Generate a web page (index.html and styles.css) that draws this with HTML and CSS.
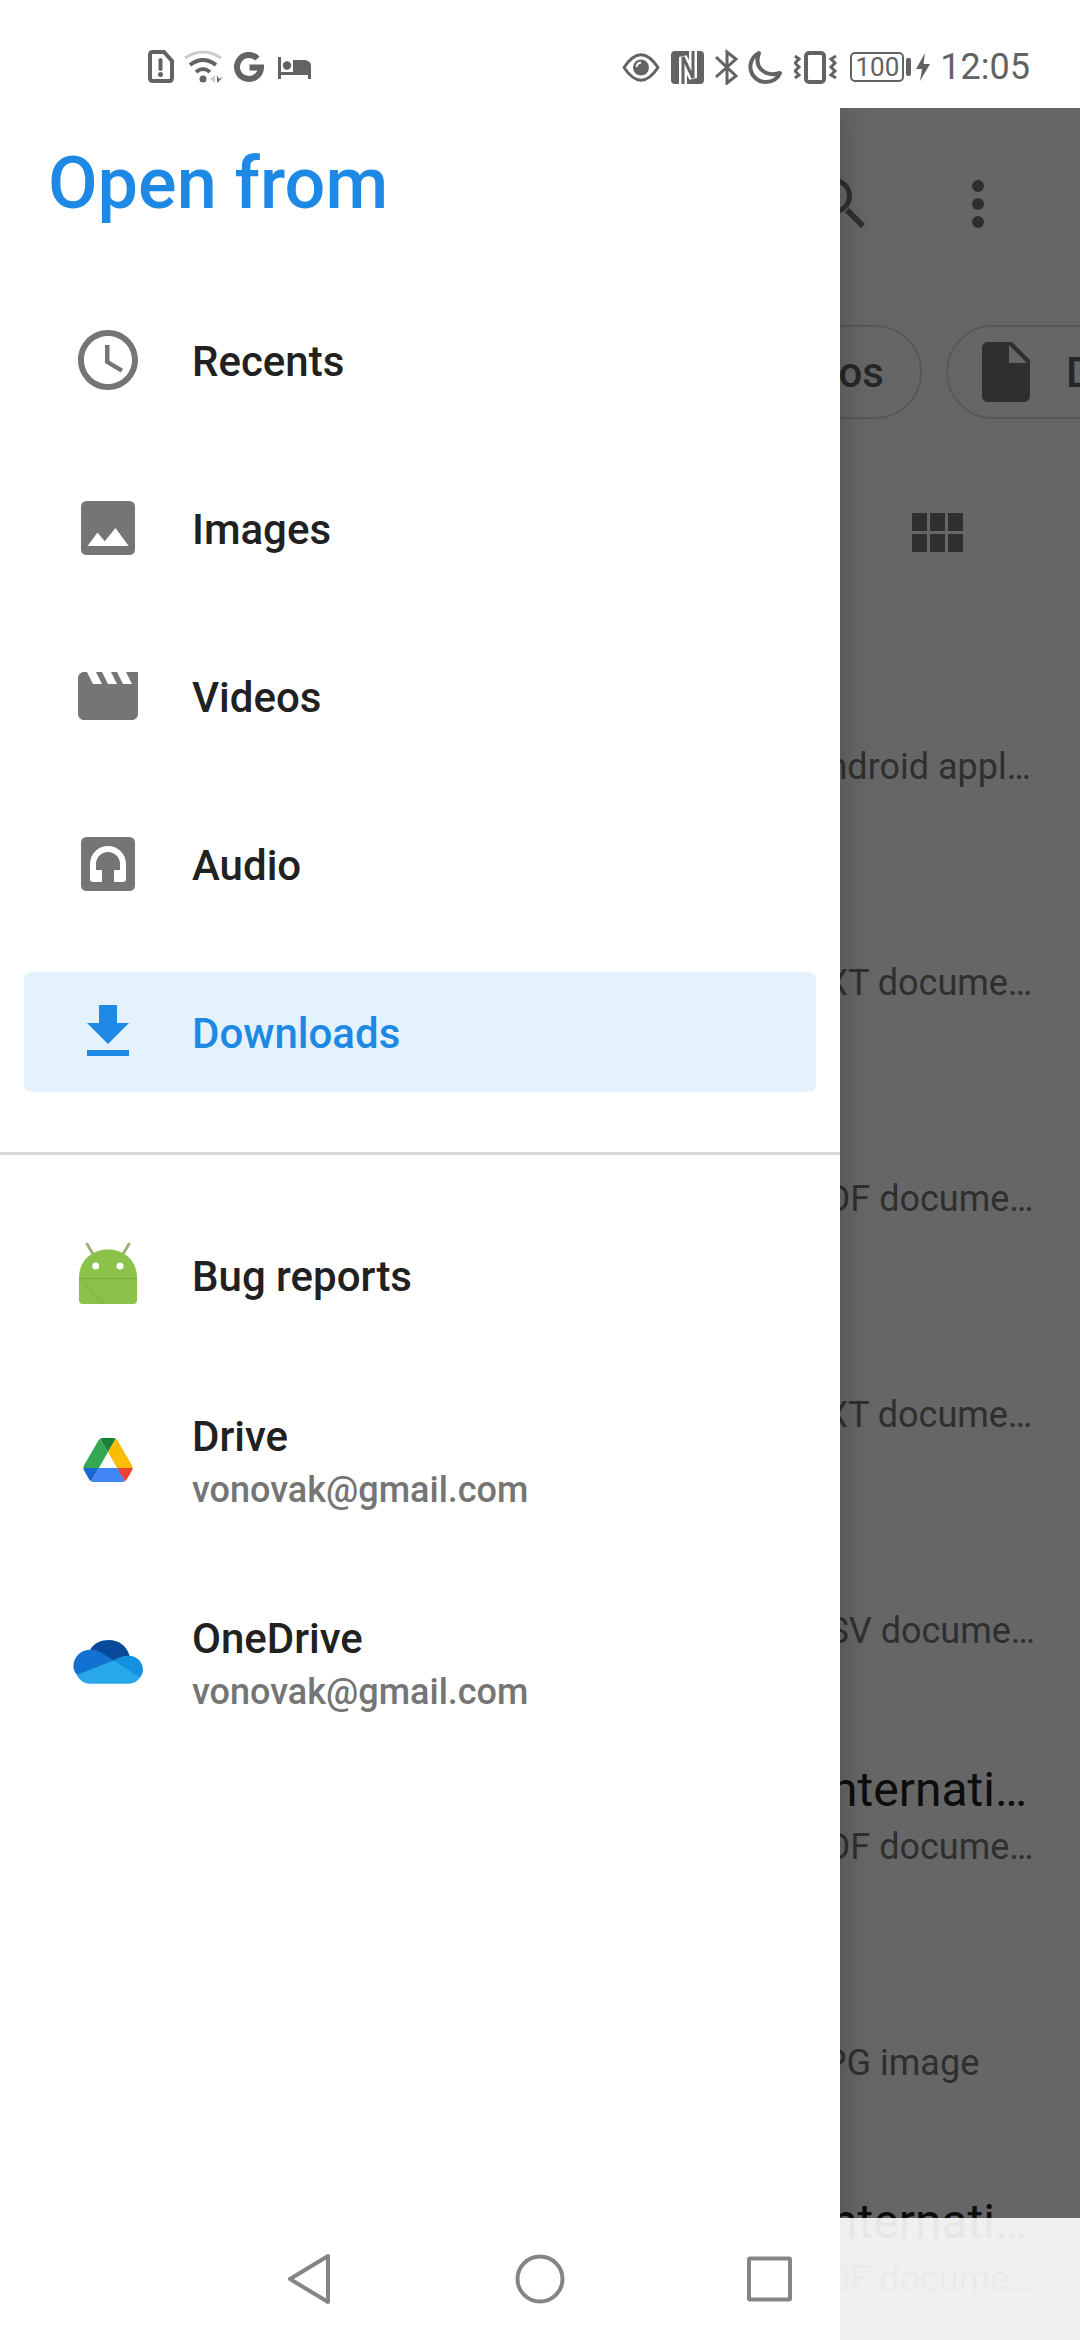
FILE: index.html
```html
<!DOCTYPE html>
<html lang="en">
<head>
<meta charset="utf-8">
<meta name="viewport" content="width=device-width, initial-scale=1">
<title>Open from</title>
<link rel="stylesheet" href="styles.css">
</head>
<body>
<header class="status">
  <div class="status-group">
    <svg width="26" height="36" viewBox="148 48 26 36" fill="none" stroke="currentColor" stroke-width="4"><path d="M153 51H164L172 60V77Q172 80 169 80H153Q150 80 150 77V54Q150 51 153 51Z"/><path d="M160.500 59V68" stroke-linecap="round"/><circle cx="160.500" cy="73.500" r="2.500" fill="currentColor" stroke="none"/></svg>
    <svg width="40" height="36" viewBox="184 48 40 36" fill="none" stroke="currentColor" stroke-width="4"><path d="M185 57Q203 45 221 57" stroke="#ccc" stroke-width="3"/><path d="M190 64Q203 54 216 64M196 71Q203 65 210 71"/><circle cx="203" cy="78" r="3.500" fill="currentColor" stroke="none"/><path d="M215 74V82L210 78Z" fill="#ccc" stroke="none"/><path d="M217 74V82L223 76L219 78Z" fill="currentColor" stroke="none"/></svg>
    <svg width="34" height="36" viewBox="234 48 34 36" fill="none" stroke="currentColor" stroke-width="6"><path d="M257.500 57.500A12 12 0 1 0 261 66.500H249.500"/></svg>
    <svg width="34" height="36" viewBox="278 48 34 36" fill="currentColor"><path d="M278 56h3v15h12V59h12q6 1 6 6v13h-3v-4h-27v4h-3z"/><circle cx="287" cy="64.500" r="4.200"/></svg>
  </div>
  <div class="status-group">
    <svg width="38" height="36" viewBox="620 48 38 36" fill="none" stroke="currentColor" stroke-width="3"><path d="M622 66.500Q639 41 656 66.500Q639 92 622 66.500Z" stroke-linejoin="round"/><circle cx="639" cy="66.500" r="8" fill="currentColor" stroke="none"/><path d="M634.500 66Q635 62 639 61.500" stroke="#fff" stroke-width="2"/></svg>
    <svg width="34" height="36" viewBox="668 48 34 36" fill="none"><rect x="669" y="50" width="33" height="33" rx="4" fill="currentColor"/><path d="M681 83V56L691 77V50" stroke="#fff" stroke-width="8"/><path d="M681 83V56L691 77V50" stroke="currentColor" stroke-width="3"/></svg>
    <svg width="24" height="36" viewBox="712 48 24 36" fill="none" stroke="currentColor" stroke-width="3"><path d="M714 56L734 75L725 82V51L734 58L714 76"/></svg>
    <svg width="36" height="36" viewBox="746 48 36 36" fill="none" stroke="currentColor" stroke-width="4" stroke-linejoin="round"><path d="M757 52C742 60 748 81 764 81C771 81 776 77 778 72C765 76 751 68 757 52Z"/></svg>
    <svg width="46" height="36" viewBox="792 48 46 36" fill="none" stroke="currentColor" stroke-width="4"><rect x="804" y="52" width="18" height="29" rx="3"/><path d="M793 55L797 58L793 62L797 66L793 70L797 74L793 77M834 55L829 58L833 62L829 66L833 70L829 74L834 77" stroke-width="3"/></svg>
    <div class="battery"><span class="battery-level">100</span><span class="battery-tip"></span>
      <svg width="14" height="28" viewBox="0 0 14 28" fill="currentColor"><path d="M9 0L0 16H6L4 28L14 11H7.500Z"/></svg>
    </div>
    <time class="clock">12:05</time>
  </div>
</header>

<div class="stage">
  <main class="browser">
    <div class="toolbar">
      <button class="icon-button" aria-label="Search"><svg width="72" height="72" viewBox="0 0 72 72" fill="none" stroke="currentColor"><circle cx="30" cy="28" r="15.500" stroke-width="5"/><path d="M43 42L59 58" stroke-width="6"/></svg></button>
      <button class="icon-button" aria-label="More options"><svg width="72" height="72" viewBox="0 0 24 24" fill="currentColor"><circle cx="12" cy="6" r="2"/><circle cx="12" cy="12" r="2"/><circle cx="12" cy="18" r="2"/></svg></button>
    </div>
    <div class="chips">
      <button class="chip"><svg width="72" height="72" viewBox="0 0 24 24" fill="currentColor"><path d="M18 4l2 4h-3l-2-4h-2l2 4h-3l-2-4H8l2 4H7L5 4H4c-1.100 0-2 .9-2 2v12c0 1.100.9 2 2 2h16c1.100 0 2-.9 2-2V4h-4z"/></svg>Videos</button>
      <button class="chip"><svg width="72" height="72" viewBox="0 0 24 24" fill="currentColor"><path fill-rule="evenodd" d="M6 2C4.900 2 4 2.900 4 4V20C4 21.100 4.900 22 6 22H18C19.100 22 20 21.100 20 20V8L14 2H6ZM13 3V9H19Z"/></svg>Documents</button>
    </div>
    <div class="viewbar">
      <button class="icon-button" aria-label="Grid view"><svg width="72" height="72" viewBox="0 0 24 24" fill="currentColor"><path d="M4 11h5V5H4v6zm0 7h5v-6H4v6zm6 0h5v-6h-5v6zm6 0h5v-6h-5v6zm-6-7h5V5h-5v6zm6-6v6h5V5h-5z"/></svg></button>
    </div>
    <ul class="files">
      <li class="file"><span class="file-name"></span><span class="file-type">Android appl…</span></li>
      <li class="file"><span class="file-name"></span><span class="file-type">TXT docume…</span></li>
      <li class="file"><span class="file-name"></span><span class="file-type">PDF docume…</span></li>
      <li class="file"><span class="file-name"></span><span class="file-type">TXT docume…</span></li>
      <li class="file"><span class="file-name"></span><span class="file-type">CSV docume…</span></li>
      <li class="file"><span class="file-name">Internati…</span><span class="file-type">PDF docume…</span></li>
      <li class="file"><span class="file-name"></span><span class="file-type">JPG image</span></li>
      <li class="file"><span class="file-name">Internati…</span><span class="file-type">PDF docume…</span></li>
    </ul>
  </main>
  <div class="scrim"></div>

  <nav class="drawer" aria-label="Open from">
    <h1 class="drawer-title">Open from</h1>
    <div class="roots">
      <button class="root"><svg width="72" height="72" viewBox="0 0 24 24" fill="currentColor"><path d="M11.990 2C6.470 2 2 6.480 2 12s4.470 10 9.990 10C17.520 22 22 17.520 22 12S17.520 2 11.990 2zM12 20c-4.420 0-8-3.580-8-8s3.580-8 8-8 8 3.580 8 8-3.580 8-8 8z"/><path d="M12.500 7H11v6l5.250 3.150.75-1.230-4.500-2.670z"/></svg>Recents</button>
      <button class="root"><svg width="72" height="72" viewBox="0 0 24 24" fill="currentColor"><path fill-rule="evenodd" d="M5 3H19Q21 3 21 5V19Q21 21 19 21H5Q3 21 3 19V5Q3 3 5 3ZM5.200 18H18.900L14.500 12L10.900 16.400L8.500 13.500Z"/></svg>Images</button>
      <button class="root"><svg width="72" height="72" viewBox="0 0 24 24" fill="currentColor"><path d="M18 4l2 4h-3l-2-4h-2l2 4h-3l-2-4H8l2 4H7L5 4H4c-1.100 0-2 .9-2 2v12c0 1.100.9 2 2 2h16c1.100 0 2-.9 2-2V4h-4z"/></svg>Videos</button>
      <button class="root"><svg width="72" height="72" viewBox="0 0 24 24" fill="currentColor"><path fill-rule="evenodd" d="M5 3H19Q21 3 21 5V19Q21 21 19 21H5Q3 21 3 19V5Q3 3 5 3ZM6 12V17Q6 18 7 18H10V14H8V12A4 4 0 0 1 16 12V14H14V18H17Q18 18 18 17V12A6 6 0 0 0 6 12Z"/></svg>Audio</button>
      <button class="root root-active" aria-current="true"><svg width="72" height="72" viewBox="0 0 24 24" fill="currentColor"><path d="M19 9h-4V3H9v6H5l7 7 7-7zM5 18v2h14v-2H5z"/></svg>Downloads</button>
    </div>
    <hr class="divider">
    <div class="roots">
      <button class="root"><svg width="72" height="72" viewBox="0 0 72 72"><path d="M15 5L21 15M57 5L51 15" stroke="#9cb67a" stroke-width="3" stroke-linecap="round"/><path d="M7 39C7 1 65 1 65 39V61Q65 65 61 65H11Q7 65 7 61Z" fill="#8bc34a"/><path d="M7 40H11L36 65H27Z" fill="#7fb344" opacity=".5"/><path d="M7 39.500H65" stroke="#78a840" stroke-width="1"/><circle cx="23.700" cy="27" r="3.500" fill="#fff"/><circle cx="48" cy="27" r="3.500" fill="#fff"/></svg>Bug reports</button>
      <button class="root root-account"><svg width="72" height="44" viewBox="-20 0 127.300 78"><path fill="#1967d2" d="m6.600 66.850 3.850 6.650c.8 1.400 1.950 2.500 3.300 3.300l13.750-23.800h-27.500c0 1.550.4 3.100 1.200 4.500z"/><path fill="#34a853" d="m43.650 25-13.750-23.800c-1.350.8-2.500 1.900-3.300 3.300l-25.400 44a9.060 9.060 0 0 0 -1.200 4.500h27.500z"/><path fill="#ea4335" d="m73.550 76.800c1.350-.8 2.500-1.900 3.300-3.300l1.600-2.750 7.650-13.250c.8-1.400 1.200-2.950 1.200-4.500h-27.502l5.852 11.500z"/><path fill="#188038" d="m43.650 25 13.750-23.800c-1.350-.8-2.900-1.200-4.500-1.200h-18.500c-1.600 0-3.150.45-4.500 1.200z"/><path fill="#4285f4" d="m59.800 53h-32.300l-13.750 23.800c1.350.8 2.900 1.200 4.500 1.200h50.800c1.600 0 3.150-.45 4.500-1.200z"/><path fill="#fbbc04" d="m73.400 26.500-12.700-22c-.8-1.400-1.950-2.500-3.300-3.300l-13.750 23.800 16.150 28h27.450c0-1.550-.4-3.100-1.200-4.500z"/></svg><span class="account"><span>Drive</span><span class="account-mail">vonovak@gmail.com</span></span></button>
      <button class="root root-account"><svg width="72" height="44" viewBox="-4 0 214 131"><path fill="#094a9a" d="M50 29C62 8 83 0 105 0C137 0 160 20 167 47L118 75L50 45Z"/><path fill="#1272d2" d="M50 29C66 28 78 34 88 41L122 61L14 106C4 98 0 88 0 79C0 51 22 29 50 29Z"/><path fill="#1490df" d="M118 62C132 53 146 47 165 47C188 47 207 66 207 88C207 98 204 106 196 114Z"/><path fill="#28a8ea" d="M10 104L119 61L198 111C190 125 178 130 165 130H50C33 130 19 120 10 104Z"/></svg><span class="account"><span>OneDrive</span><span class="account-mail">vonovak@gmail.com</span></span></button>
    </div>
  </nav>

  <footer class="navbar">
    <button class="nav-button" aria-label="Back"><svg width="72" height="72" viewBox="0 0 72 72"><path d="M16 36L54 13V59Z"/></svg></button>
    <button class="nav-button" aria-label="Home"><svg width="72" height="72" viewBox="0 0 72 72"><circle cx="36" cy="36" r="22.500"/></svg></button>
    <button class="nav-button" aria-label="Overview"><svg width="72" height="72" viewBox="0 0 72 72"><rect x="15" y="15.500" width="41" height="41" rx="1"/></svg></button>
  </footer>
</div>
</body>
</html>
```
FILE: styles.css
```css
* { box-sizing: border-box; }

body {
  margin: 0;
  height: 100vh;
  display: flex;
  flex-direction: column;
  overflow: hidden;
  background: #fff;
  color: #212121;
  font-family: Roboto, "Noto Sans", sans-serif;
}

button {
  display: flex;
  align-items: center;
  margin: 0;
  padding: 0;
  border: 0;
  background: none;
  font: inherit;
  color: inherit;
  text-align: left;
}

svg { display: block; flex: none; }

/* Status bar */
.status {
  flex: none;
  height: 108px;
  padding: 26px 50px 0 148px;
  display: flex;
  justify-content: space-between;
  align-items: center;
  color: #636363;
}
.status-group { display: flex; align-items: center; gap: 10px; }
.battery { display: flex; align-items: center; gap: 2px; }
.battery-level {
  width: 54px;
  height: 30px;
  border: 2px solid;
  border-radius: 5px;
  font-size: 26px;
  line-height: 27px;
  text-align: center;
}
.battery-tip { width: 5px; height: 18px; margin-right: 3px; border-radius: 2px; background: currentColor; }
.clock { font-size: 36px; line-height: 42px; }

/* Area shared by the file list and the drawer */
.stage { position: relative; flex: 1; min-height: 0; overflow: hidden; }

.toolbar {
  height: 192px;
  padding-right: 66px;
  display: flex;
  justify-content: flex-end;
  align-items: center;
  gap: 66px;
  color: #757575;
}
.chips {
  height: 144px;
  display: grid;
  grid-template-columns: 1fr 134px;
  gap: 24px;
  align-items: center;
}
.chip {
  justify-self: start;
  height: 94px;
  padding: 0 36px 0 22px;
  gap: 24px;
  border: 2px solid #dadce0;
  border-radius: 47px;
  font-size: 42px;
  font-weight: 500;
  color: #5f6368;
}
.chip:first-child { justify-self: end; }
.chip svg { color: #757575; }
.viewbar {
  height: 180px;
  padding-right: 108px;
  display: flex;
  justify-content: flex-end;
  align-items: center;
  color: #757575;
}

.files { margin: 0; padding: 0; list-style: none; }
.file {
  height: 216px;
  padding: 58px 50px 0 0;
  display: flex;
  flex-direction: column;
  align-items: flex-end;
  gap: 8px;
}
.file-name {
  width: 212px;
  height: 56px;
  font-size: 48px;
  line-height: 56px;
}
.file-type {
  width: 226px;
  font-size: 36px;
  line-height: 42px;
  white-space: nowrap;
  color: #757575;
}

.scrim { position: absolute; inset: 0; background: rgba(0, 0, 0, .6); }

/* Drawer */
.drawer {
  position: absolute;
  inset: 0 240px 0 0;
  background: #fff;
  box-shadow: 0 0 32px rgba(0, 0, 0, .24);
}
.drawer-title {
  margin: 0;
  padding: 34px 48px 50px;
  font-size: 72px;
  line-height: 84px;
  font-weight: 500;
  color: #1e88e5;
}
.roots {
  display: flex;
  flex-direction: column;
  gap: 48px;
  padding: 24px 24px 60px;
}
.root {
  height: 120px;
  padding: 4px 48px 0;
  gap: 48px;
  border-radius: 8px;
  font-size: 42px;
  line-height: 48px;
  font-weight: 500;
}
.root svg { margin-bottom: 4px; color: #757575; }
.root-active, .root-active svg { color: #1e88e5; }
.root-active { background: #e3f2fd; }
.root-account { height: 154px; }
.account { display: flex; flex-direction: column; gap: 8px; }
.account-mail {
  font-size: 36px;
  line-height: 42px;
  color: #757575;
}
.divider { height: 3px; margin: 0; border: 0; background: #dadada; }
.divider + .roots { padding-top: 60px; }

/* System navigation */
.navbar {
  position: absolute;
  inset: auto 0 0;
  height: 122px;
  display: flex;
  justify-content: center;
  align-items: center;
  gap: 158px;
  background: rgba(255, 255, 255, .9);
}
.nav-button svg {
  fill: none;
  stroke: #858585;
  stroke-width: 4;
  stroke-linejoin: round;
}
```
